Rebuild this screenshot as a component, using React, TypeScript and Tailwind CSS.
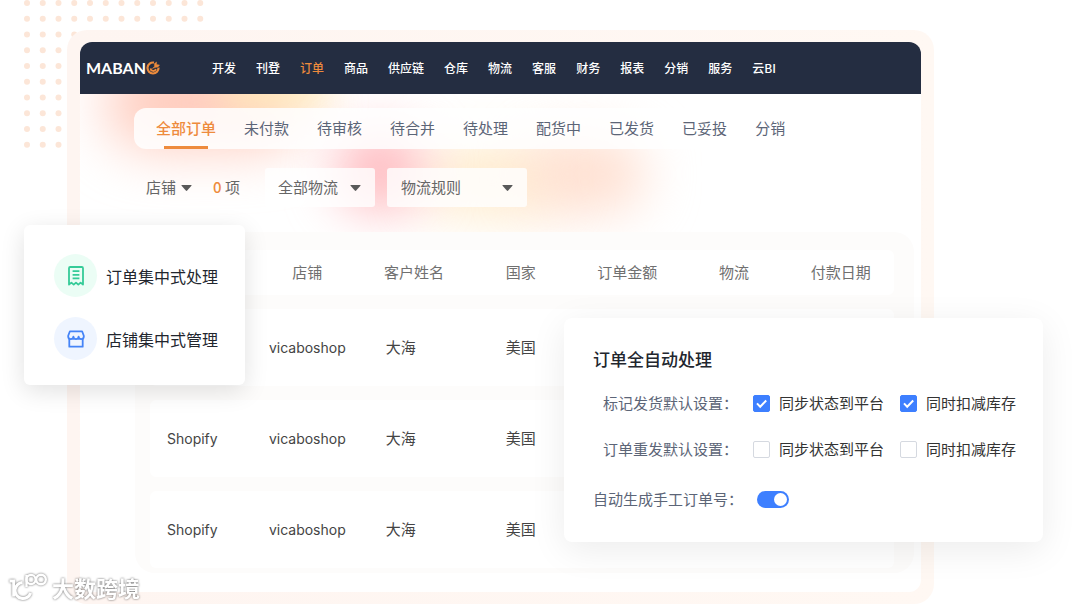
import React from "react";

const NAV = ["开发", "刊登", "订单", "商品", "供应链", "仓库", "物流", "客服", "财务", "报表", "分销", "服务", "云BI"];
const TABS = ["全部订单", "未付款", "待审核", "待合并", "待处理", "配货中", "已发货", "已妥投", "分销"];
const COLUMNS = ["", "店铺", "客户姓名", "国家", "订单金额", "物流", "付款日期"];
const ROWS = [
  { platform: "", shop: "vicaboshop", customer: "大海", country: "美国" },
  { platform: "Shopify", shop: "vicaboshop", customer: "大海", country: "美国" },
  { platform: "Shopify", shop: "vicaboshop", customer: "大海", country: "美国" },
];

function DotGrid() {
  const dots = [];
  for (let row = 0; row < 10; row++) {
    for (let col = 0; col < 12; col++) {
      dots.push(<circle key={`${row}-${col}`} cx={27 + col * 15.75} cy={3 + row * 15.75} r="3" />);
    }
  }
  return (
    <svg className="absolute left-0 top-0 h-[160px] w-[210px] fill-[#fce6d8]" aria-hidden="true">
      {dots}
    </svg>
  );
}

function Caret() {
  return (
    <svg viewBox="0 0 11 6" className="pointer-events-none h-1.5 w-[11px] fill-[#595959]" aria-hidden="true">
      <path d="M1 0h9q1 0 .4.8L6.2 5.6q-.7.7-1.4 0L.6.8Q0 0 1 0z" />
    </svg>
  );
}

function Logo() {
  return (
    <a href="#" aria-label="MABANG" className="flex w-[126px] shrink-0 items-center font-['Lato',sans-serif] text-[16px] leading-4 font-bold text-white">
      MABAN
      <svg viewBox="0 0 14 14" className="h-3.5 w-3.5" fill="none" stroke="#ec8b3c" aria-hidden="true">
        <path d="M8 1.6A5.5 5.5 0 1 0 12.5 6.6" strokeWidth="2.2" />
        <path d="M4.6 7.4a2.7 2.7 0 0 0 5.3.6" strokeWidth="1.8" />
        <path d="M6.2 7.6L8.4 5.4V2.6L10.6.9V3.6l3 .3-1.6 2.2-2.8.5z" fill="#ec8b3c" strokeWidth=".4" />
      </svg>
    </a>
  );
}

function Glow() {
  return (
    <div className="pointer-events-none absolute inset-x-0 top-[52px] h-[138px] overflow-hidden" aria-hidden="true">
      <div className="absolute -top-9 left-[26px] h-[90px] w-[200px] rounded-full bg-[#ffc4b4]/90 blur-[28px]" />
      <div className="absolute -top-6 left-[140px] h-[40px] w-[110px] rounded-full bg-[#fff0b8]/80 blur-[18px]" />
      <div className="absolute top-[48px] left-[340px] h-[76px] w-[140px] rounded-full bg-[#ffe8c4]/80 blur-[26px]" />
      <div className="absolute top-[42px] left-[445px] h-[76px] w-[120px] rounded-full bg-[#ffdccb]/90 blur-[26px]" />
      <div className="absolute top-[34px] left-[255px] h-[84px] w-[90px] rounded-full bg-[#ffb4b9]/90 blur-[25px]" />
    </div>
  );
}

function Filter({ label, className, caretClass }: { label: string; className: string; caretClass: string }) {
  return (
    <div className={`relative flex items-center ${className}`}>
      <select aria-label={label} className="h-full w-full appearance-none rounded-[3px] bg-transparent text-[15px] text-[#666] outline-none">
        <option>{label}</option>
      </select>
      <span className={`pointer-events-none absolute ${caretClass}`}>
        <Caret />
      </span>
    </div>
  );
}

function Check({ label, checked }: { label: string; checked?: boolean }) {
  return (
    <label className="flex items-center gap-[9px] text-[#333]">
      <span className="relative flex h-[17px] w-[17px]">
        <input
          type="checkbox"
          defaultChecked={checked}
          className="peer h-[17px] w-[17px] appearance-none rounded-[2px] border border-[#d5d9e0] bg-white checked:border-[#3d7fff] checked:bg-[#3d7fff]"
        />
        <svg viewBox="0 0 17 17" className="pointer-events-none absolute inset-0 hidden peer-checked:block" fill="none" stroke="white" strokeWidth="2" aria-hidden="true">
          <path d="M4 8.4l3.2 3.3 6-6.2" />
        </svg>
      </span>
      {label}
    </label>
  );
}

function Settings() {
  return (
    <section className="absolute top-[318px] right-[37px] w-[479px] rounded-lg bg-white pt-[29px] pr-6 pb-[31px] pl-[29px] text-[15px] leading-6 shadow-[0_8px_36px_rgba(0,0,0,0.08)]">
      <h2 className="text-[17px] leading-6 font-medium text-[#22262e]">订单全自动处理</h2>
      <div className="mt-5 flex items-center">
        <span className="w-[160px] pl-2.5 whitespace-nowrap text-[#5c6577]">标记发货默认设置：</span>
        <div className="flex gap-4">
          <Check label="同步状态到平台" checked />
          <Check label="同时扣减库存" checked />
        </div>
      </div>
      <div className="mt-[22px] flex items-center">
        <span className="w-[160px] pl-2.5 whitespace-nowrap text-[#5c6577]">订单重发默认设置：</span>
        <div className="flex gap-4">
          <Check label="同步状态到平台" />
          <Check label="同时扣减库存" />
        </div>
      </div>
      <label className="mt-[26px] flex items-center text-[#5c6577]">
        <span className="w-[164px] whitespace-nowrap">自动生成手工订单号：</span>
        <span className="relative flex">
          <input type="checkbox" role="switch" defaultChecked className="peer h-[17px] w-8 appearance-none rounded-full bg-[#c9ced8] checked:bg-[#3d7fff]" />
          <span className="pointer-events-none absolute top-0.5 left-0.5 h-[13px] w-[13px] rounded-full bg-white peer-checked:left-[17px]" />
        </span>
      </label>
    </section>
  );
}

function Features() {
  return (
    <ul className="absolute top-[225px] left-6 flex w-[221px] flex-col gap-5 rounded-[6px] bg-white pt-[29px] pb-[25px] pl-[30px] text-[16px] text-[#22262e] shadow-[0_6px_24px_rgba(0,0,0,0.12)]">
      <li className="flex items-center gap-[9px]">
        <span className="flex h-[43px] w-[43px] items-center justify-center rounded-full bg-[#ebfdf5]">
          <svg viewBox="0 0 18 20" className="h-5 w-[18px]" fill="none" stroke="#35cb98" strokeWidth="1.8" strokeLinejoin="round" aria-hidden="true">
            <path d="M2 18.6V2.2Q2 1 3.2 1h11.6Q16 1 16 2.2v16.4l-2.4-2-2.3 2L9 16.6l-2.3 2-2.3-2z" />
            <path d="M5.6 5.2h6.8M5.6 8.8h6.8M5.6 12.4h6.8" strokeWidth="1.8" />
          </svg>
        </span>
        订单集中式处理
      </li>
      <li className="flex items-center gap-[9px]">
        <span className="flex h-[43px] w-[43px] items-center justify-center rounded-full bg-[#eff5ff]">
          <svg viewBox="0 0 18 18" className="h-[18px] w-[18px]" fill="none" stroke="#4584f7" strokeWidth="1.8" strokeLinejoin="round" aria-hidden="true">
            <path d="M2.9 1.3h12.2l1.7 4.4v.9a2.6 2.6 0 0 1-5.2 0 2.6 2.6 0 0 1-5.2 0 2.6 2.6 0 0 1-5.2 0v-.9z" />
            <path d="M2.3 8.8v7.9h13.4V8.8" />
          </svg>
        </span>
        店铺集中式管理
      </li>
    </ul>
  );
}

function Watermark() {
  return (
    <div className="absolute top-[571px] left-2 flex items-center gap-1 text-[22px] leading-8 font-bold text-white drop-shadow-[0_0_1px_rgba(0,0,0,0.6)]">
      <svg viewBox="0 0 40 30" className="h-[30px] w-10" fill="none" stroke="white" strokeWidth="3" aria-hidden="true">
        <path d="M1.5 9h4.2V24.5" />
        <path d="M14.5 10.5A8 8 0 1 0 22.6 21" />
        <path d="M18.5 15V3" strokeWidth="2.4" />
        <circle cx="23" cy="7.5" r="4.6" strokeWidth="2.4" />
        <circle cx="33" cy="7.5" r="4.8" strokeWidth="2.4" />
      </svg>
      大数跨境
    </div>
  );
}

export default function App() {
  return (
    <div className="relative min-h-screen overflow-hidden bg-white pt-[30px] pb-1 font-['Noto_Sans_CJK_SC',sans-serif]">
      <DotGrid />
      <main className="relative mr-[146px] ml-[67px] rounded-[20px] bg-linear-to-r from-[#fef5f1] to-[#fff8f3] px-[13px] py-3">
        <div className="relative overflow-hidden rounded-xl bg-white pb-[19px]">
          <Glow />
          <header className="relative flex h-[52px] items-center bg-[#242d41] pl-1.5">
            <Logo />
            <nav className="flex gap-5 text-xs font-medium whitespace-nowrap text-white">
              {NAV.map((item) => (
                <a key={item} href="#" className={item === "订单" ? "text-[#ee8b3d]" : ""}>
                  {item}
                </a>
              ))}
            </nav>
          </header>

          <div className="relative mt-3.5 ml-[54px] flex h-[41px] gap-7 rounded-xl bg-white/85 pl-[22px] text-[15px] whitespace-nowrap">
            {TABS.map((tab, i) => (
              <button key={tab} className={i === 0 ? "relative font-medium text-[#ee8b3d]" : "text-[#5c6577]"}>
                {tab}
                {i === 0 && <span className="absolute bottom-0 left-2 h-[3px] w-11 bg-[#ee8b3d]" />}
              </button>
            ))}
          </div>

          <div className="relative mt-[19px] flex h-[39px] items-center pl-[66px] text-[15px] text-[#666]">
            <Filter label="店铺" className="h-full w-[46px]" caretClass="right-0" />
            <span className="ml-[21px] w-[52px]">
              <span className="font-medium text-[#ee8b3d]">0</span> 项
            </span>
            <Filter label="全部物流" className="h-full w-[110px] rounded-[3px] bg-white/80 pl-[13px]" caretClass="right-3.5" />
            <Filter label="物流规则" className="ml-3 h-full w-[140px] rounded-[3px] bg-white/80 pl-3.5" caretClass="right-3.5" />
          </div>

          <div className="relative mt-[25px] mr-[7px] ml-[55px] rounded-[20px] bg-[#fdfcfb] pt-1 pr-5 pb-px pl-[15px]">
            <table className="-mb-2.5 w-full table-fixed border-separate border-spacing-x-0 border-spacing-y-[14px] text-[15px]">
              <thead>
                <tr className="h-[45px] text-[#707070]">
                  {COLUMNS.map((column, i) => (
                    <th key={i} className="bg-white p-0 font-normal first:w-[104px] first:rounded-l-md last:rounded-r-md">
                      {column}
                    </th>
                  ))}
                </tr>
              </thead>
              <tbody>
                {ROWS.map((row, i) => (
                  <tr key={i} className="h-[77px] text-center text-[#444]">
                    <td className="rounded-l-md bg-white p-0 pl-[17px] text-left font-['Inter',sans-serif] text-[14px]">{row.platform}</td>
                    <td className="bg-white p-0 font-['Inter',sans-serif] text-[14px]">{row.shop}</td>
                    <td className="bg-white p-0 pl-[25px] text-left">{row.customer}</td>
                    <td className="bg-white p-0">{row.country}</td>
                    <td className="bg-white p-0" />
                    <td className="bg-white p-0" />
                    <td className="rounded-r-md bg-white p-0" />
                  </tr>
                ))}
              </tbody>
            </table>
          </div>
        </div>
      </main>
      <Features />
      <Settings />
      <Watermark />
    </div>
  );
}
